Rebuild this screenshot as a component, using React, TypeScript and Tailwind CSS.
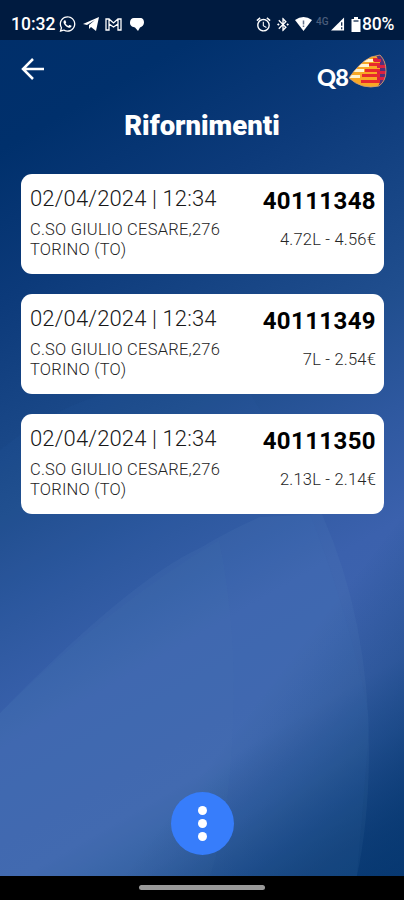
import { FaWhatsapp } from "react-icons/fa";
import { MdAlarm, MdBluetoothConnected } from "react-icons/md";

const refills = [
  { code: "40111348", amount: "4.72L - 4.56€" },
  { code: "40111349", amount: "7L - 2.54€" },
  { code: "40111350", amount: "2.13L - 2.14€" },
];

function Background() {
  return (
    <svg className="absolute inset-0 h-full w-full" viewBox="0 0 404 900" aria-hidden="true">
      <defs>
        <linearGradient id="base" gradientUnits="userSpaceOnUse" x1="0" y1="0" x2="500" y2="866">
          <stop offset="0" stopColor="#002e69" />
          <stop offset=".13" stopColor="#00306c" />
          <stop offset=".26" stopColor="#0c3a7a" />
          <stop offset=".45" stopColor="#204e8e" />
          <stop offset=".55" stopColor="#2e589f" />
          <stop offset=".65" stopColor="#3b61ad" />
          <stop offset=".77" stopColor="#3e64ad" />
          <stop offset=".83" stopColor="#305a9f" />
          <stop offset=".91" stopColor="#154280" />
          <stop offset="1" stopColor="#00306a" />
        </linearGradient>
        <linearGradient id="corner" gradientUnits="userSpaceOnUse" x1="235" y1="730" x2="390" y2="850">
          <stop offset="0" stopColor="#063870" stopOpacity="0" />
          <stop offset="1" stopColor="#063870" stopOpacity=".7" />
        </linearGradient>
      </defs>
      <rect width="404" height="900" fill="url(#base)" />
      <rect width="404" height="900" fill="url(#corner)" />
      <path d="M0 450Q80 385 170 385H245Q330 520 370 720L357 876H0Z" fill="#3f6cc4" fillOpacity=".05" />
      <path d="M0 713Q130 580 200 548Q230 530 260 517L322 514Q369 620 369 750Q369 820 357 876H0Z" fill="#8fb3d6" fillOpacity=".06" />
      <path d="M219 540Q240 640 231 760Q226 830 210 876H0V713Q110 605 219 540Z" fill="#8fb3d6" fillOpacity=".02" />
    </svg>
  );
}

function StatusBar() {
  return (
    <header className="flex h-10 items-end justify-between bg-[#001b40] pr-[9px] pb-[6px] pl-[11px] text-white">
      <div className="flex h-5 items-center">
        <span className="w-[44px] text-[17.5px] leading-5 font-medium whitespace-nowrap">10:32</span>
        <FaWhatsapp className="ml-1 h-[18px] w-[17px]" />
        <svg className="ml-[7px] h-[14px] w-[16px]" viewBox="0 0 16 14" fill="currentColor">
          <path d="M0 7 16 0 13 14 8 10 6 12V8l6-5-8 5Z" />
        </svg>
        <svg className="ml-[6px] h-[13px] w-[17px]" viewBox="0 0 17 13" fill="none" stroke="currentColor" strokeWidth="1.3">
          <path d="M1 1h3l4.5 4L13 1h3v11h-3V6L8.5 9 4 6v6H1ZM4 1v5M13 1v5" />
        </svg>
        <svg className="ml-[8px] h-[13px] w-[14px]" viewBox="0 0 14 13" fill="currentColor">
          <path d="M4 0h6c3 0 4 2 4 4.500S12 9 10 9.500L8 13 5 9.500C1 8.500 0 7 0 4.500S1.500 0 4 0Z" />
        </svg>
      </div>
      <div className="flex h-5 items-center">
        <MdAlarm className="h-[17px] w-[17px]" />
        <MdBluetoothConnected className="ml-[3px] h-[17px] w-[16px]" />
        <svg className="ml-[4px] h-[14px] w-[17px]" viewBox="0 0 17 14">
          <path d="M0 3Q8.500-3 17 3L8.500 14Z" fill="white" />
          <path d="M8.500 3.500v4M8.500 8.500v1.500" stroke="#65738b" strokeWidth="1.500" />
        </svg>
        <span className="mb-[5px] ml-[4px] w-[13px] text-[10px] leading-3 font-medium text-[#4a5d7b]">4G</span>
        <svg className="ml-[2px] h-[14px] w-[14px]" viewBox="0 0 15 14">
          <path d="M0 14 14 0v14Z" fill="white" />
          <path d="M11.500 5v4M11.500 10.500v2" stroke="#001b40" strokeWidth="1.300" />
        </svg>
        <svg className="ml-[6px] h-[15px] w-[10px]" viewBox="0 0 10 15">
          <path d="M3 0h4v2h2.500v13H.5V2H3Z" fill="white" />
          <path d="M2.500 4h5" stroke="#001b40" strokeWidth="1.200" />
        </svg>
        <span className="ml-px w-[33px] text-[17.5px] leading-5 font-medium tracking-[-0.2px] whitespace-nowrap">80%</span>
      </div>
    </header>
  );
}

function Logo() {
  return (
    <div className="mt-[14px] flex items-end self-start text-white">
      <span className="font-['Lato'] text-[23.5px] leading-[23px] font-black tracking-[-0.8px]">Q8</span>
      <svg className="h-[35px] w-[40px]" viewBox="0 0 40 35">
        <defs>
          <clipPath id="sail">
            <path d="M1 24Q11 9 23 3L32 1Q38 7 38 17T31 32Q14 36 1 24Z" />
          </clipPath>
        </defs>
        <g clipPath="url(#sail)">
          <rect width="40" height="35" fill="#f9a825" />
          <path d="M12 5h13v3H12ZM7 10h14v3H7ZM3 15h13v3H3ZM0 21h12v3H0Z" fill="#fff4d2" />
          <path d="M25 4h15v3H25ZM21 9h19v3H21ZM17 15h23v3H17ZM14 20h26v3H14ZM13 26h21v3H13Z" fill="#e8292c" />
          <path d="M27 0h7l6 7v20l-7 8h-4l3-7V8Z" fill="#533078" />
          <path d="M26 5h7v3h-7ZM29 11h9v3h-9ZM29 17h9v3h-9ZM29 23h8v3h-8Z" fill="#dd2040" />
        </g>
        <path d="M1 24Q11 9 23 3L32 1Q38 7 38 17T31 32Q14 36 1 24Z" fill="none" stroke="#d5a173" strokeWidth=".8" />
      </svg>
    </div>
  );
}

export default function App() {
  return (
    <div className="relative h-[900px] w-[404px] overflow-hidden bg-[#003069] font-['Roboto',sans-serif]">
      <Background />
      <div className="relative flex h-full flex-col">
        <StatusBar />
        <nav className="flex h-[64px] justify-between pr-[16px] pl-[21px]">
          <button className="mt-[18px] h-[24px] w-[24px] text-white" aria-label="Indietro">
            <svg viewBox="0 0 24 24" fill="none" stroke="currentColor" strokeWidth="2.500">
              <path d="M23 11H3M12 1 2 11l10 10" />
            </svg>
          </button>
          <Logo />
        </nav>
        <h1 className="h-[70px] pt-[5px] text-center text-[27.5px] leading-[34px] font-black text-white">Rifornimenti</h1>
        <main className="flex flex-1 flex-col gap-5 pr-[20px] pl-[21px]">
          {refills.map((r) => (
            <article key={r.code} className="flex h-[100px] justify-between rounded-[11px] bg-white pt-[10px] pr-[8px] pl-[9px]">
              <div className="whitespace-nowrap">
                <p className="text-[22px] leading-[29px] font-light tracking-[0.14px] text-[#181818]">02/04/2024 | 12:34</p>
                <p className="mt-[7px] text-[16.5px] leading-[20px] font-light tracking-[0.22px] text-[#252525]">
                  C.SO GIULIO CESARE,276
                  <br />
                  TORINO (TO)
                </p>
              </div>
              <div className="text-right whitespace-nowrap">
                <p className="mt-[3px] text-[24px] leading-[29px] font-bold tracking-[0.4px] text-black">{r.code}</p>
                <p className="mt-[14px] text-[16.5px] leading-[20px] font-light tracking-[0.2px] text-[#252525]">{r.amount}</p>
              </div>
            </article>
          ))}
        </main>
        <button className="mb-[21px] flex h-[63px] w-[63px] flex-col items-center justify-center gap-[4px] self-center rounded-full bg-[#377dfb]" aria-label="Menu">
          <span className="h-[9px] w-[9px] rounded-full bg-white" />
          <span className="h-[9px] w-[9px] rounded-full bg-white" />
          <span className="h-[9px] w-[9px] rounded-full bg-white" />
        </button>
        <footer className="flex h-[24px] justify-center bg-black pt-[9px]">
          <div className="h-[5px] w-[126px] rounded-full bg-[#999]" />
        </footer>
      </div>
    </div>
  );
}
